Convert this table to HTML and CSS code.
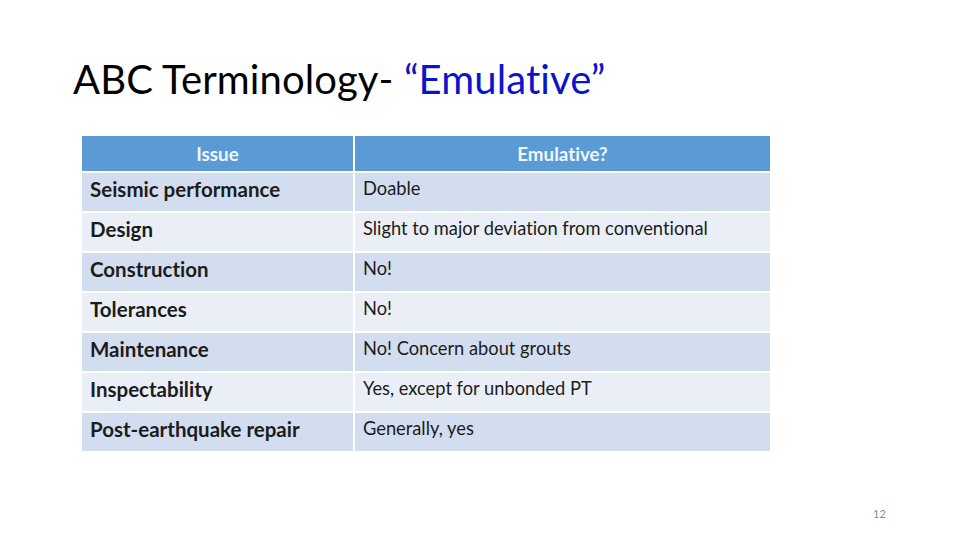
FILE: index.html
```html
<!DOCTYPE html>
<html>
<head>
<meta charset="utf-8">
<link rel="stylesheet" href="styles.css">
</head>
<body>
<div class="slide">
  <h1 class="title">ABC Terminology- <span class="accent">“Emulative”</span></h1>
  <table class="grid">
    <thead>
      <tr><th class="c1">Issue</th><th class="c2">Emulative?</th></tr>
    </thead>
    <tbody>
      <tr class="odd"><td class="key">Seismic performance</td><td>Doable</td></tr>
      <tr class="even"><td class="key">Design</td><td>Slight to major deviation from conventional</td></tr>
      <tr class="odd"><td class="key">Construction</td><td>No!</td></tr>
      <tr class="even"><td class="key">Tolerances</td><td>No!</td></tr>
      <tr class="odd"><td class="key">Maintenance</td><td>No! Concern about grouts</td></tr>
      <tr class="even"><td class="key">Inspectability</td><td>Yes, except for unbonded PT</td></tr>
      <tr class="odd"><td class="key">Post-earthquake repair</td><td>Generally, yes</td></tr>
    </tbody>
  </table>
  <div class="pagenum">12</div>
</div>
</body>
</html>
```

FILE: styles.css
```css
html, body {
  margin: 0;
  padding: 0;
  background: #ffffff;
}
.slide {
  width: 960px;
  height: 540px;
  position: relative;
  font-family: Lato, "Open Sans", sans-serif;
  font-variant-ligatures: none;
  color: #000;
  overflow: hidden;
}
.title {
  margin: 0;
  padding: 53px 0 0 73px;
  font-size: 40px;
  font-weight: 400;
  line-height: 52px;
  letter-spacing: 0.1px;
  color: #000;
}
.accent {
  color: #0a14c8;
}
.grid {
  margin: 29px 0 0 82px;
  border-collapse: separate;
  border-spacing: 2px;
  width: 692px;
  position: relative;
  left: -2px;
}
.grid th {
  background: #5b9bd5;
  color: #f2f6fb;
  font-weight: 700;
  font-size: 18.8px;
  height: 35px;
  padding: 0;
  text-align: center;
}
.grid .c1 { width: 271px; }
.grid td {
  height: 38px;
  padding: 0 8px;
  vertical-align: top;
  padding-top: 4px;
  box-sizing: border-box;
  font-size: 18.3px;
  color: #1c1c1c;
}
.grid td.key {
  font-weight: 700;
  padding-top: 4px;
  font-size: 20.5px;
}
.odd td { background: #d2deef; }
.even td { background: #eaeff7; }
.pagenum {
  position: absolute;
  left: 873px;
  top: 507px;
  font-size: 11px;
  color: #8a8a8a;
}
```
